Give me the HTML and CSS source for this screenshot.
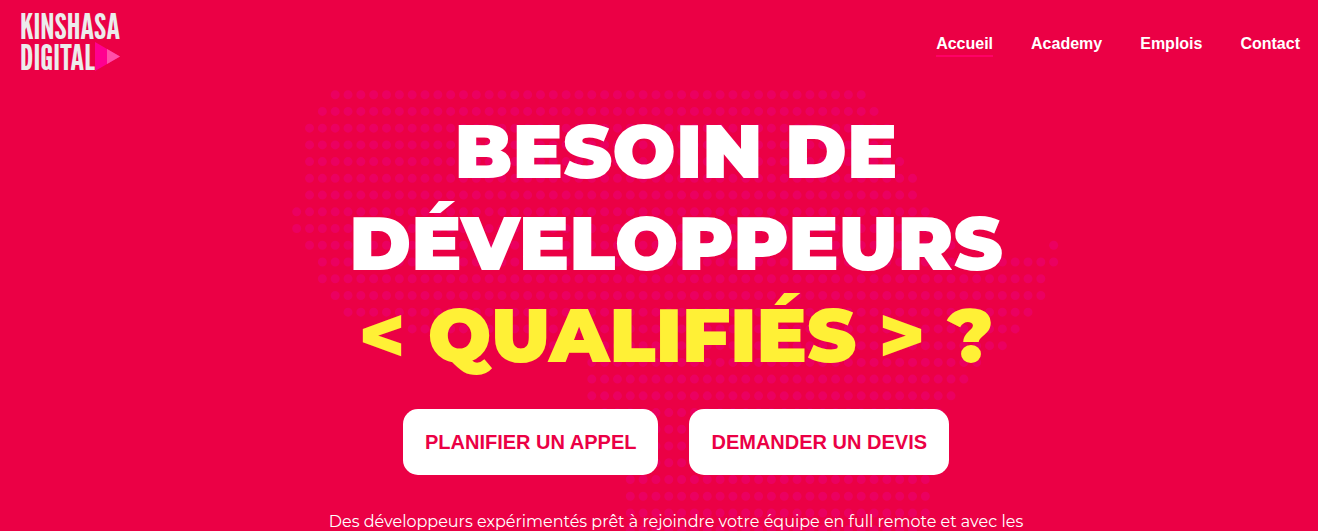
FILE: index.html
```html
<!DOCTYPE html>
<html lang="fr">
<head>
<meta charset="utf-8">
<meta name="viewport" content="width=device-width, initial-scale=1">
<title>Kinshasa Digital</title>
<link rel="stylesheet" href="styles.css">
</head>
<body>
<header class="header">
  <a class="logo" href="#accueil">
    <span class="logo-line">KINSHASA</span>
    <span class="logo-line">DIGITAL<svg class="logo-mark" viewBox="0 0 25 29" aria-hidden="true"><path d="M0 0L25 14.500L0 29Z" fill="#ff0090"/><path d="M12 7L25 14.500L12 22Z" fill="#ff4fa8"/></svg></span>
  </a>
  <nav class="nav">
    <a class="nav-link active" href="#accueil">Accueil</a>
    <a class="nav-link" href="#academy">Academy</a>
    <a class="nav-link" href="#emplois">Emplois</a>
    <a class="nav-link" href="#contact">Contact</a>
  </nav>
</header>
<main class="hero">
  <svg class="dots" viewBox="0 0 768 451" aria-hidden="true"><g id="rows"></g></svg>
  <h1 class="title">BESOIN DE<br>DÉVELOPPEURS<br><span class="accent">&lt; QUALIFIÉS &gt; ?</span></h1>
  <div class="actions">
    <button class="button" type="button">PLANIFIER UN APPEL</button>
    <button class="button" type="button">DEMANDER UN DEVIS</button>
  </div>
  <p class="lead">Des développeurs expérimentés prêt à rejoindre votre équipe en full remote et avec les</p>
</main>
<script src="dots.js"></script>
</body>
</html>
```
FILE: styles.css
```css
* { box-sizing: border-box; }
body {
  margin: 0;
  min-height: 100vh;
  overflow: hidden;
  background: #eb0045;
  color: #fff;
  font-family: "Liberation Sans", Arial, sans-serif;
}
.header {
  display: flex;
  justify-content: space-between;
  align-items: center;
  height: 88px;
  padding: 0 18px 0 20px;
}
.logo {
  display: flex;
  flex-direction: column;
  padding-bottom: 6px;
  color: #ececec;
  font: 400 36px/31px "League Gothic", "Bebas Neue", "Roboto Condensed", sans-serif;
  text-decoration: none;
}
.logo-line { display: flex; align-items: center; }
.logo-mark { width: 25px; height: 29px; }
.nav { display: flex; gap: 38px; }
.nav-link {
  padding: 4px 0 2px;
  border-bottom: 2px solid transparent;
  color: #fff;
  font-size: 16px;
  font-weight: 700;
  line-height: 18px;
  text-decoration: none;
}
.nav-link.active { border-color: #ff0066; }
.hero {
  position: relative;
  display: flex;
  flex-direction: column;
  align-items: center;
  padding: 17px 0 0 34px;
}
.dots {
  position: absolute;
  z-index: -1;
  top: 0;
  left: calc(50% - 368px);
  width: 768px;
  height: 451px;
  stroke: #eb0060;
  stroke-width: 9;
  stroke-linecap: round;
  stroke-dasharray: 0 12.830;
}
.title {
  margin: 0;
  font: 900 75px/92px Montserrat, Inter, sans-serif;
  text-align: center;
}
.accent { color: #fff036; }
.actions { display: flex; gap: 31px; margin-top: 28px; }
.button {
  padding: 21px 22px;
  border: 0;
  border-radius: 15px;
  background: #fff;
  color: #eb0045;
  font: 700 20px/24px "Liberation Sans", Arial, sans-serif;
}
.lead {
  margin: 35px 0 0;
  font: 400 16px/24px Montserrat, Inter, sans-serif;
}
```
FILE: dots.js
```js
// First and last dot column of each row of the map.
const rows = [
  [3, 44], [2, 45], [1, 46], [1, 46], [1, 47], [1, 48], [1, 48], [0, 49], [0, 50],
  [1, 51], [2, 59], [2, 58], [3, 58], [4, 57], [9, 56], [20, 55], [23, 53], [23, 52],
  [23, 51], [24, 50], [24, 50], [25, 49], [25, 49], [26, 49], [26, 49], [26, 49], [26, 48]
];
const group = document.getElementById("rows");
const step = 12.83;
function addRow(index, first, last) {
  const line = document.createElementNS("http://www.w3.org/2000/svg", "path");
  const y = 6.7 + index * 16.73;
  line.setAttribute("d", `M${5.7 + first * step} ${y}H${5.8 + last * step}`);
  group.appendChild(line);
}
rows.forEach(([first, last], index) => addRow(index, first, last));
addRow(9, 59, 59);
```
